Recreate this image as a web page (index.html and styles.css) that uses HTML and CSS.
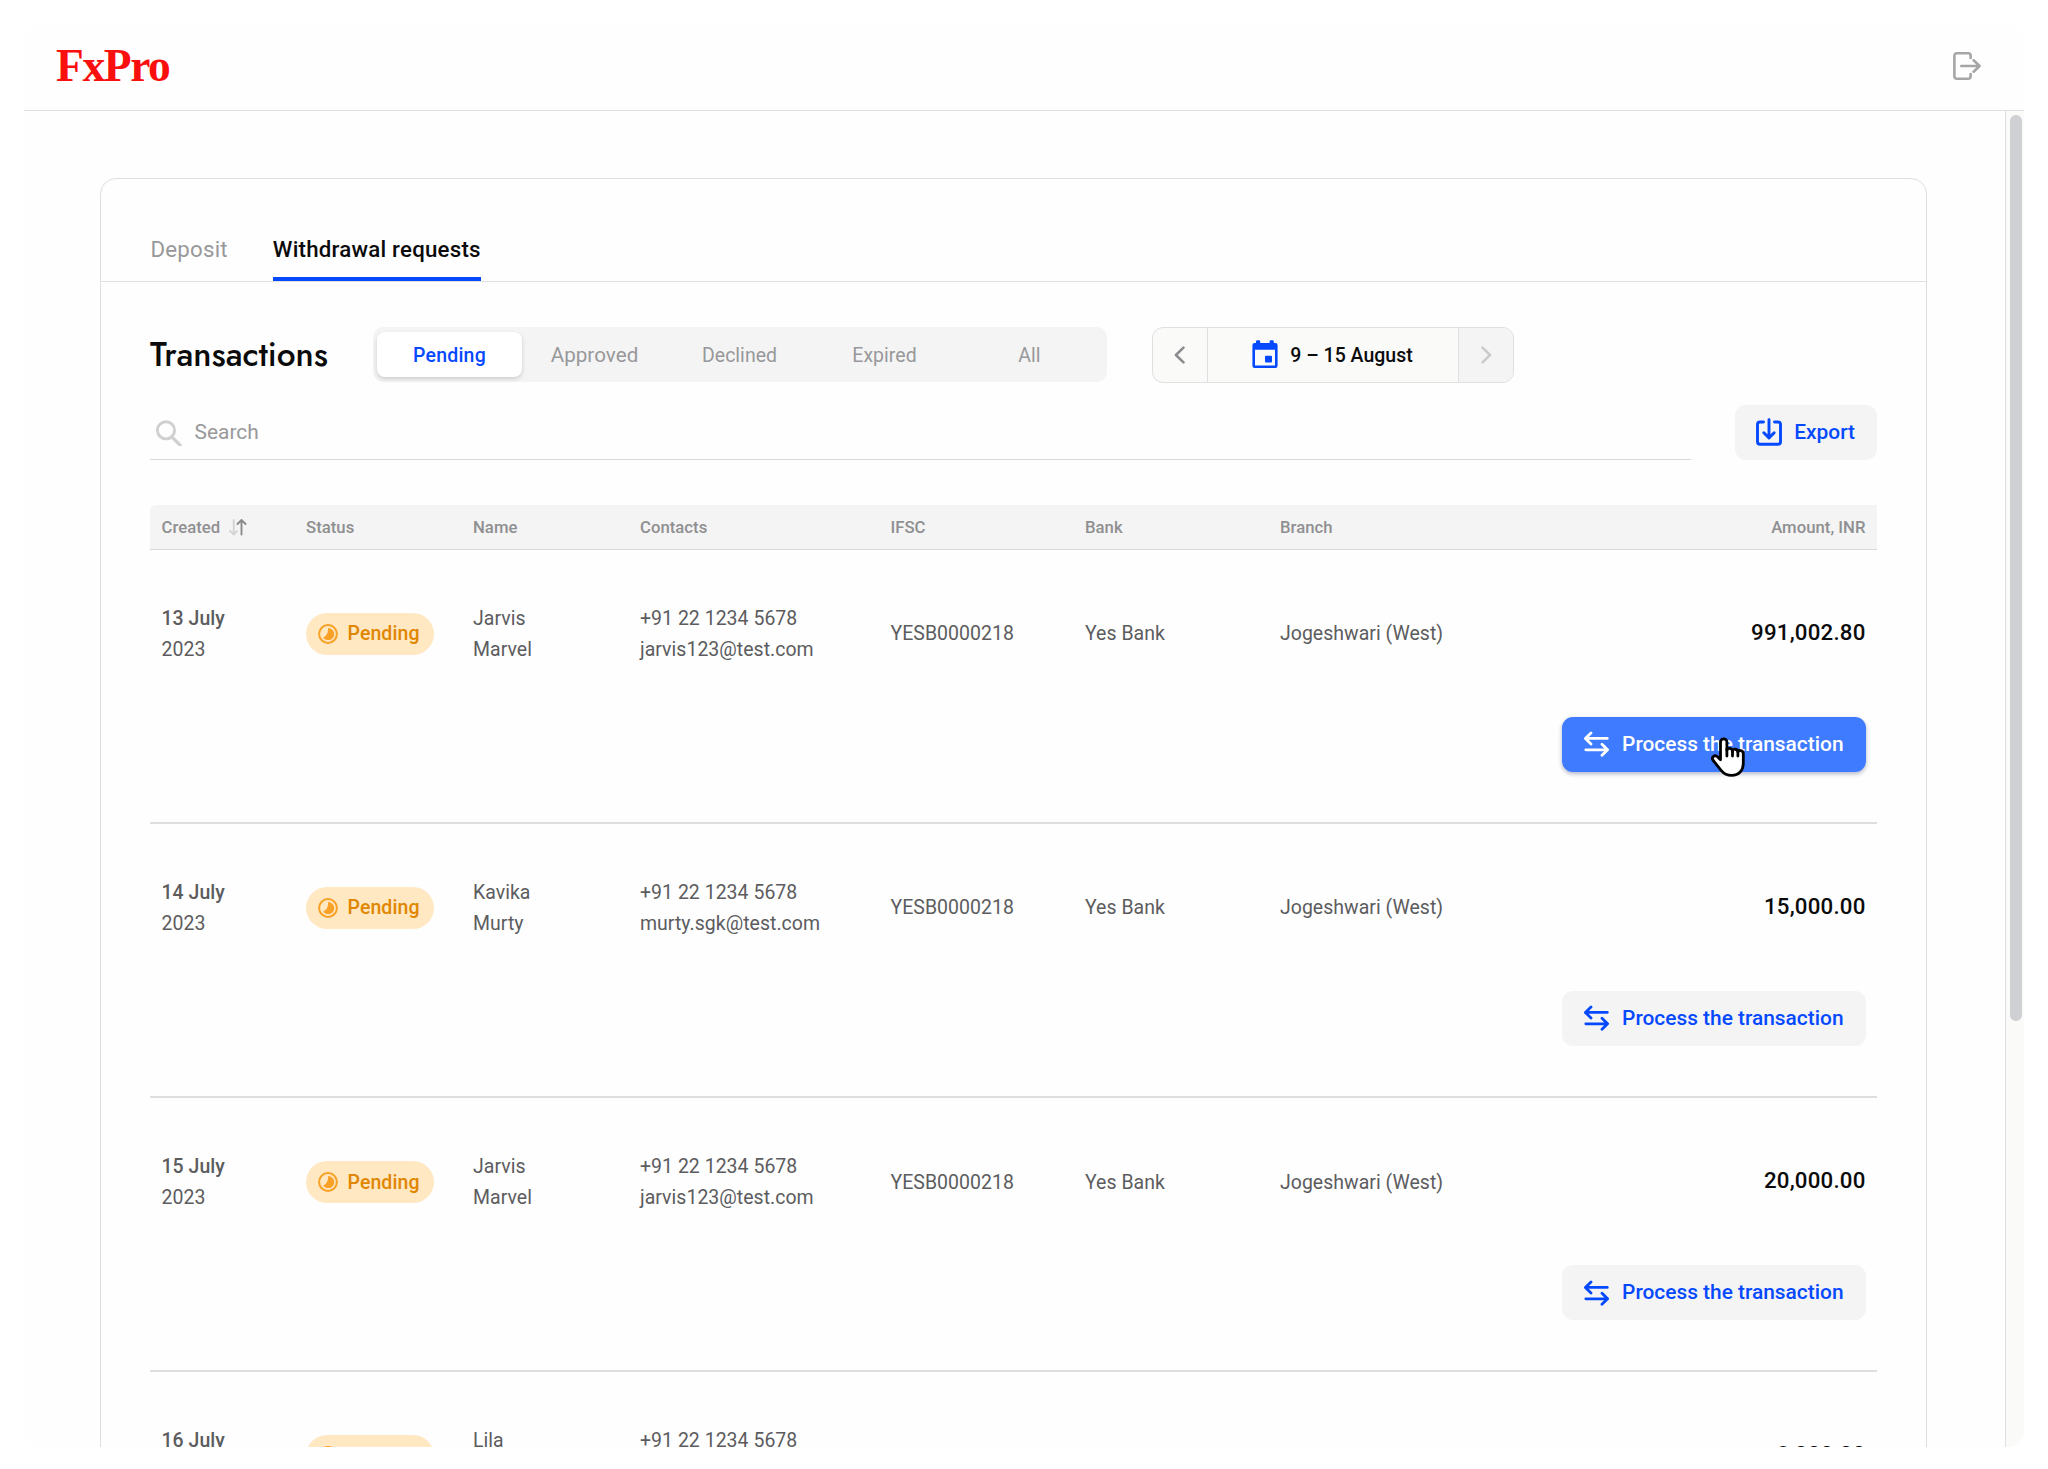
FILE: index.html
```html
<!DOCTYPE html>
<html lang="en">
<head>
<meta charset="utf-8">
<title>FxPro – Transactions</title>
<link rel="stylesheet" href="styles.css">
</head>
<body>
<svg class="sprite" aria-hidden="true">
  <symbol id="i-pending" viewBox="0 0 20 20">
    <circle cx="10" cy="10" r="8.9" fill="none" stroke="currentColor" stroke-width="2"/>
    <path fill="currentColor" d="M10.200 4.100a6 6 0 1 1-5 9.300q4.800-1 5-9.300z"/>
  </symbol>
  <symbol id="i-swap" viewBox="0 0 27 26" fill="none" stroke="currentColor" stroke-width="2.8" stroke-linecap="round" stroke-linejoin="round">
    <path d="M24.300 7.400H2.600M8 1.900 2.400 7.400 8 12.900M2.800 18.800h21.800M19 13.300l5.600 5.500-5.600 5.500"/>
  </symbol>
</svg>

<div class="window">
  <header class="header">
    <span class="logo">FxPro</span>
    <svg class="logout" viewBox="0 0 28 28" fill="none" stroke="#a6a6a6" stroke-width="2.600" stroke-linecap="round" stroke-linejoin="round">
      <path d="M17.600 6V3.600a2.300 2.300 0 0 0-2.300-2.300H3.700a2.300 2.300 0 0 0-2.300 2.300v20.800a2.300 2.300 0 0 0 2.300 2.300h11.600a2.300 2.300 0 0 0 2.300-2.300V22"/>
      <path d="M8.300 14h18.300M20.600 8.300l6 5.700-6 5.700"/>
    </svg>
  </header>

  <div class="body">
    <main class="content">
      <section class="card">
        <nav class="tabs">
          <a class="tab">Deposit</a>
          <a class="tab tab-active">Withdrawal requests</a>
        </nav>

        <div class="panel">
          <div class="toolbar">
            <h1 class="title">Transactions</h1>
            <div class="segments">
              <span class="segment segment-active">Pending</span>
              <span class="segment segment-wide">Approved</span>
              <span class="segment">Declined</span>
              <span class="segment">Expired</span>
              <span class="segment">All</span>
            </div>
            <div class="range">
              <span class="step">
                <svg class="chevron" viewBox="0 0 12 18" fill="none" stroke="#8c8c8f" stroke-width="2.5" stroke-linecap="round" stroke-linejoin="round"><path d="M9.500 1.600 1.900 9l7.600 7.400"/></svg>
              </span>
              <span class="dates">
                <svg class="calendar" viewBox="0 0 26 28" fill="#0549ff">
                  <path fill-rule="evenodd" d="M4 1.500A1.300 1.300 0 0 1 5.300.2h1.600a1.300 1.300 0 0 1 1.300 1.300V3h9.400V1.500A1.300 1.300 0 0 1 18.900.2h1.600a1.300 1.300 0 0 1 1.300 1.300V3h1.600A2.200 2.200 0 0 1 25.600 5.200v20.600A2.200 2.200 0 0 1 23.400 28H2.600A2.200 2.200 0 0 1 .4 25.800V5.200A2.200 2.200 0 0 1 2.600 3H4zM3 9.700v15.800h20V9.700z"/>
                  <rect x="13" y="15.700" width="7" height="6.800" rx="1"/>
                </svg>
                <span class="dates-text">9 – 15 August</span>
              </span>
              <span class="step step-off">
                <svg class="chevron" viewBox="0 0 12 18" fill="none" stroke="#cbcbcd" stroke-width="2.500" stroke-linecap="round" stroke-linejoin="round"><path d="M2.500 1.600 10.100 9 2.500 16.400"/></svg>
              </span>
            </div>
          </div>

          <div class="search-row">
            <div class="search">
              <svg class="lens" viewBox="0 0 26 26" fill="none" stroke="#d0d0d1" stroke-width="2.900" stroke-linecap="round"><circle cx="10" cy="10.300" r="8.600"/><path d="m17.300 18.300 6.800 6.800" stroke-width="3.300"/></svg>
              Search
            </div>
            <span class="button">
              <svg class="download" viewBox="0 0 26 28" fill="none" stroke="currentColor" stroke-width="2.900" stroke-linecap="round" stroke-linejoin="round">
                <path d="M7.500 4H4a2.500 2.500 0 0 0-2.500 2.500v17.200a2.500 2.500 0 0 0 2.500 2.500h18a2.500 2.500 0 0 0 2.500-2.500V6.500A2.500 2.500 0 0 0 22 4h-3.500"/>
                <path d="M13 1.600v18.200M7.800 14.700l5.200 5.200 5.200-5.200"/>
              </svg>
              Export
            </span>
          </div>

          <div class="table">
            <div class="grid head">
              <span class="sortable">Created
                <svg class="sort" viewBox="0 0 18 17" fill="none" stroke-width="1.900" stroke-linecap="round" stroke-linejoin="round"><path stroke="#d3d3d5" d="M4.700 1v14.500M1 11.800l3.700 3.700L8 12.200"/><path stroke="#8c8c8f" d="M12.500 15.500V1M8.500 5l4-4 4 4"/></svg>
              </span>
              <span>Status</span><span>Name</span><span>Contacts</span><span>IFSC</span><span>Bank</span><span>Branch</span><span class="right">Amount, INR</span>
            </div>

            <article class="row">
              <div class="grid">
                <div><b class="day">13 July</b><br>2023</div>
                <div><span class="badge"><svg class="badge-icon"><use href="#i-pending"/></svg>Pending</span></div>
                <div>Jarvis<br>Marvel</div>
                <div>+91 22 1234 5678<br>jarvis123@test.com</div>
                <div>YESB0000218</div><div>Yes Bank</div><div>Jogeshwari (West)</div>
                <div class="amount right">991,002.80</div>
              </div>
              <div class="actions">
                <span class="button button-hover"><svg class="swap"><use href="#i-swap"/></svg>Process the transaction
                  <svg class="cursor" viewBox="0 0 34 40" stroke="#000" stroke-width="2.800" stroke-linejoin="round" stroke-linecap="round" fill="#fff">
                    <path d="M9.500 5a3.200 3.200 0 0 1 6.400 0v8.200c0-2.600 5.400-2.600 5.600.8 0-2.500 5.200-2.500 5.400.9.400-2.200 5.400-2 5.400 1.600V26c0 7.500-4.600 12.400-11.500 12.400-5 0-7.900-1.700-10.700-5.100L2.200 23.500c-2.400-3 1.300-6.200 4-4l3.300 3.300z"/>
                    <path fill="none" d="M15.900 12v7M21.500 13.500V19M26.900 14.500V19"/>
                  </svg>
                </span>
              </div>
            </article>

            <article class="row">
              <div class="grid">
                <div><b class="day">14 July</b><br>2023</div>
                <div><span class="badge"><svg class="badge-icon"><use href="#i-pending"/></svg>Pending</span></div>
                <div>Kavika<br>Murty</div>
                <div>+91 22 1234 5678<br>murty.sgk@test.com</div>
                <div>YESB0000218</div><div>Yes Bank</div><div>Jogeshwari (West)</div>
                <div class="amount right">15,000.00</div>
              </div>
              <div class="actions"><span class="button"><svg class="swap"><use href="#i-swap"/></svg>Process the transaction</span></div>
            </article>

            <article class="row">
              <div class="grid">
                <div><b class="day">15 July</b><br>2023</div>
                <div><span class="badge"><svg class="badge-icon"><use href="#i-pending"/></svg>Pending</span></div>
                <div>Jarvis<br>Marvel</div>
                <div>+91 22 1234 5678<br>jarvis123@test.com</div>
                <div>YESB0000218</div><div>Yes Bank</div><div>Jogeshwari (West)</div>
                <div class="amount right">20,000.00</div>
              </div>
              <div class="actions"><span class="button"><svg class="swap"><use href="#i-swap"/></svg>Process the transaction</span></div>
            </article>

            <article class="row">
              <div class="grid">
                <div><b class="day">16 July</b><br>&nbsp;</div>
                <div><span class="badge"><svg class="badge-icon"><use href="#i-pending"/></svg></span></div>
                <div>Lila<br>&nbsp;</div>
                <div>+91 22 1234 5678<br>&nbsp;</div>
                <div></div><div></div><div></div>
                <div class="amount right">8,000.00</div>
              </div>
            </article>
          </div>
        </div>
      </section>
    </main>
    <aside class="scrollbar"><div class="thumb"></div></aside>
  </div>
</div>
</body>
</html>
```
FILE: styles.css
```css
* { box-sizing: border-box; }

body {
  margin: 0;
  background: #fff;
  color: #5c5c5e;
  font: 400 19.48px/31px Roboto, "Liberation Sans", sans-serif;
  letter-spacing: 0.03px;
  overflow: hidden;
}

.sprite { display: none; }
svg { display: block; flex: none; }

.window {
  display: flex;
  flex-direction: column;
  width: 2000px;
  height: 1424px;
  margin: 23px auto 0;
  background: #fefefe;
  border-radius: 16px;
  overflow: hidden;
}

/* Header */
.header {
  display: flex;
  align-items: center;
  justify-content: space-between;
  flex: none;
  height: 88px;
  padding: 0 43px 0 32px;
  border-bottom: 1px solid #dfdfe0;
}
.logo {
  padding-bottom: 2px;
  color: #fa0f0f;
  font: 700 45.5px/60px "Liberation Serif", serif;
  letter-spacing: -1.4px;
}
.logout { width: 28px; height: 28px; margin-bottom: 1px; }

.body { display: flex; flex: 1; min-height: 0; }
.content { flex: 1; padding: 67px 78px 0 76px; overflow: hidden; }
.scrollbar {
  flex: none;
  width: 19px;
  padding: 4px 2px 0 4px;
  background: #fafaf9;
  border-left: 1px solid #dfdfe0;
}
.thumb { width: 12px; height: 906px; border-radius: 6px; background: #cfd0d2; }

/* Card */
.card {
  height: 1500px;
  border: 1px solid #dededf;
  border-radius: 16px;
}
.tabs {
  display: flex;
  gap: 45px;
  height: 103px;
  padding: 0 49.5px;
  border-bottom: 1px solid #e0e0e1;
}
.tab {
  height: 102px;
  padding-top: 55px;
  color: #98989a;
  font-size: 22.27px;
  letter-spacing: 0.22px;
}
.tab-active {
  color: #0b0b0c;
  font-weight: 500;
  border-bottom: 4px solid #0549ff;
  border-radius: 2px 2px 0 0;
}
.panel { padding: 45px 49px 0; }

/* Toolbar */
.toolbar { display: flex; align-items: center; height: 55px; }
.title {
  width: 222.5px;
  margin: 0;
  color: #0b0b0c;
  font: 500 33.4px/44px Jost, Lato, sans-serif;
  letter-spacing: 0;
}
.segments {
  display: flex;
  width: 734px;
  height: 55px;
  padding: 5px 4.5px;
  background: #f4f4f4;
  border-radius: 10px;
}
.segment {
  display: flex;
  flex: 1;
  align-items: center;
  justify-content: center;
  padding-top: 1px;
  color: #98989a;
}
.segment-wide { font-size: 20.6px; }
.segment-active {
  background: #fff;
  border-radius: 8px;
  box-shadow: 0 2px 4px rgba(0, 0, 0, 0.16);
  color: #0549ff;
  font-weight: 500;
  letter-spacing: 0.2px;
}
.range {
  display: flex;
  width: 362px;
  height: 56px;
  margin-left: 45px;
  border: 1px solid #dfdfe1;
  border-radius: 11px;
  background: #fafaf9;
  overflow: hidden;
}
.step { display: flex; flex: none; align-items: center; justify-content: center; width: 54px; }
.step-off { background: #f4f4f4; }
.chevron { width: 12px; height: 18px; }
.dates {
  display: flex;
  flex: 1;
  align-items: center;
  justify-content: center;
  gap: 12px;
  border: solid #dfdfe1;
  border-width: 0 1px;
  color: #0b0b0c;
  font-weight: 500;
}
.dates-text { padding-top: 2px; }
.calendar { width: 26px; height: 28px; margin-bottom: 2px; }

/* Search */
.search-row { display: flex; justify-content: space-between; margin-top: 23px; }
.search {
  display: flex;
  align-items: center;
  gap: 13px;
  width: 1540.5px;
  height: 55px;
  padding-left: 5.5px;
  border-bottom: 1px solid #d9d9da;
  color: #98989a;
  font-size: 20.88px;
}
.lens { width: 26px; height: 26px; margin-top: 2px; }

.button {
  position: relative;
  display: flex;
  align-items: center;
  gap: 12.5px;
  height: 55px;
  padding: 0 22px 0 20.5px;
  background: #f4f4f4;
  border-radius: 11px;
  color: #0549ff;
  font-size: 20.88px;
  font-weight: 500;
  letter-spacing: 0;
}
.button-hover {
  background: #3f7bff;
  color: #fff;
  box-shadow: 0 2px 4px rgba(0, 20, 80, 0.3);
}
.download { width: 26px; height: 28px; margin-top: -2px; }
.swap { width: 27px; height: 26px; }

/* Table */
.table { margin-top: 45px; }
.grid {
  display: grid;
  grid-template-columns: 144.5px 167px 167px 250.5px 194.5px 195px 200px 1fr;
  align-items: center;
  padding: 0 11.5px;
}
.right { text-align: right; }
.head {
  height: 44.5px;
  padding-top: 1px;
  background: #f4f4f4;
  border-bottom: 1.5px solid #d9d9da;
  border-radius: 6px 0 0 0;
  color: #8f8f91;
  font-size: 16.7px;
  font-weight: 500;
}
.sortable { display: flex; align-items: center; gap: 9px; }
.sort { width: 18px; height: 17px; }

.row {
  height: 274.1px;
  padding-top: 53.4px;
  border-bottom: 2px solid #dededf;
}
.row .grid { height: 62px; }
.day { font-weight: 500; }
.amount {
  padding-bottom: 3px;
  color: #0b0b0c;
  font-size: 22.27px;
  font-weight: 500;
  letter-spacing: 0.2px;
}
.badge {
  display: inline-flex;
  align-items: center;
  gap: 9.5px;
  height: 42px;
  width: 127.5px;
  padding-left: 12px;
  vertical-align: middle;
  background: #ffe8c2;
  border-radius: 21px;
  color: #e08600;
  font-weight: 500;
  letter-spacing: 0.1px;
}
.badge-icon { width: 20px; height: 20px; color: #f9a126; }
.actions { display: flex; justify-content: flex-end; padding: 52px 11.5px 0 0; }
.cursor { position: absolute; left: 149px; top: 19px; width: 34px; height: 42px; }
```
